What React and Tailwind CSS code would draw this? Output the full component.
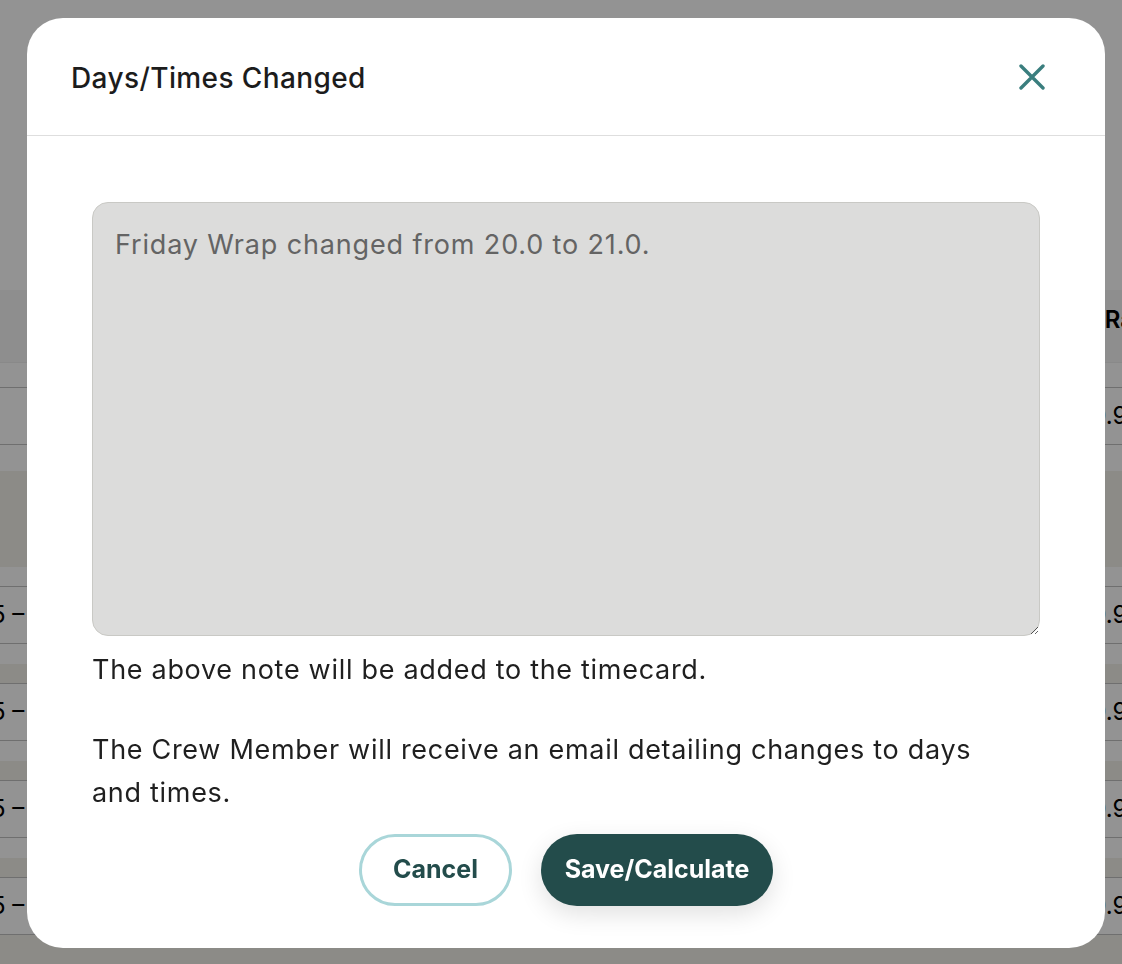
import React from "react";

const font = { fontFamily: "Inter, 'Noto Sans', sans-serif" };

function DataRow() {
  return (
    <>
      <div className="h-[57px] flex items-center justify-between border-b border-[#c1c1c1] text-[24px] text-black">
        <span className="-ml-[9px]">5 –</span>
        <span className="-mr-[20px]">0.95</span>
      </div>
      <div className="h-[20px]" />
      <div className="h-[20px] bg-[#f3f2eb] border-b border-[#c1c1c1]" />
    </>
  );
}

function PageBehind() {
  return (
    <div className="h-[964px] overflow-hidden bg-white" style={font}>
      <div className="h-[290px]" />
      <div className="h-[73px] bg-[#f7f7f7] flex items-center justify-end border-b border-[#ededed]">
        <span className="-mr-[12px] text-[24px] font-semibold text-black -translate-y-[6px]">Ra</span>
      </div>
      <div className="h-[25px] border-b border-[#c1c1c1]" />
      <div className="h-[57px] flex items-center justify-end border-b border-[#c1c1c1] text-[24px] text-black">
        <span className="-mr-[20px]">0.95</span>
      </div>
      <div className="h-[26px]" />
      <div className="h-[96px] bg-[#f3f2eb]" />
      <div className="h-[20px] border-b border-[#c1c1c1]" />
      <DataRow />
      <DataRow />
      <DataRow />
      <div className="h-[57px] flex items-center justify-between border-b border-[#c1c1c1] text-[24px] text-black">
        <span className="-ml-[9px]">5 –</span>
        <span className="-mr-[20px]">0.95</span>
      </div>
      <div className="h-[30px] bg-[#f3f2eb]" />
    </div>
  );
}

export default function App() {
  return (
    <div className="relative h-[964px] overflow-hidden">
      <PageBehind />
      <div className="fixed inset-0 bg-black/[0.425] pt-[18px] pl-[27px]" style={font}>
        <div className="w-[1078px] h-[930px] bg-white rounded-[36px] flex flex-col">
          <div className="h-[118px] shrink-0 flex items-center justify-between pl-[44px] pr-[60px] pt-[3px] border-b border-[#dedede]">
            <h2 className="text-[28px] font-medium text-[#1c1c1c] tracking-[0.4px]">Days/Times Changed</h2>
            <button className="w-[26px] h-[26px] text-[#3a7e7e] -mt-[3px]">
              <svg viewBox="0 0 26 26" width="26" height="26" fill="none" stroke="currentColor" strokeWidth="3.4" strokeLinecap="round">
                <path d="M2 2L24 24M24 2L2 24" />
              </svg>
            </button>
          </div>
          <div className="flex-1 flex flex-col px-[65px] pt-[66px] pb-[43px]">
            <textarea
              className="h-[434px] w-full shrink-0 bg-[#dcdcdb] border border-[#c9c9c5] rounded-[16px] px-[22px] py-[22px] text-[27px] tracking-[0.85px] text-[#1c1c1c] placeholder:text-[#646464] outline-none"
              placeholder="Friday Wrap changed from 20.0 to 21.0."
            />
            <p className="mt-[12px] text-[27px] tracking-[0.7px] leading-[43px] text-[#1f1f1f]">
              The above note will be added to the timecard.
            </p>
            <p className="mt-[37px] text-[27px] tracking-[0.7px] leading-[43px] text-[#1f1f1f] pr-[60px]">
              The Crew Member will receive an email detailing changes to days and times.
            </p>
            <div className="mt-[20px] flex justify-center gap-[29px]">
              <button className="h-[72px] w-[153px] rounded-full border-[3px] border-[#a9d6d9] bg-white text-[25px] font-bold text-[#234c4b]">
                Cancel
              </button>
              <button className="h-[72px] w-[232px] rounded-full bg-[#234c4b] text-[25px] font-bold text-white shadow-[0_8px_24px_rgba(0,0,0,0.12)]">
                Save/Calculate
              </button>
            </div>
          </div>
        </div>
      </div>
    </div>
  );
}
